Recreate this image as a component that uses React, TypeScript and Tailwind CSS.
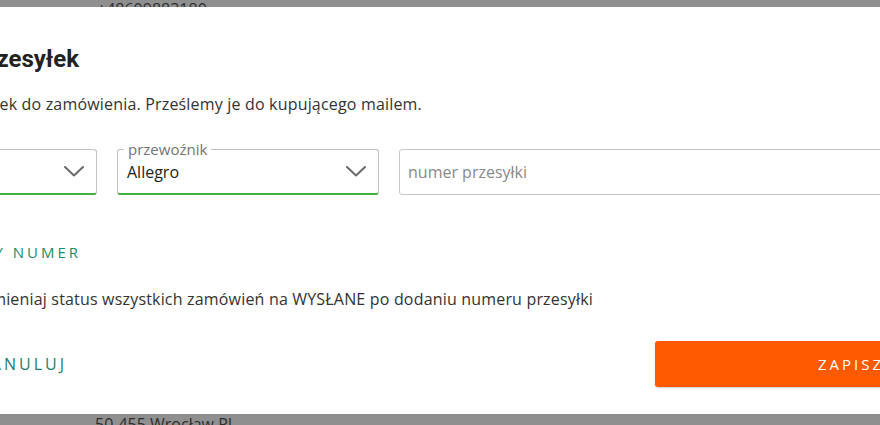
import React from "react"

const Chevron = () => (
  <svg width="20" height="11" viewBox="0 0 20 11" fill="none" className="shrink-0">
    <path d="M1 1 L10 9.5 L19 1" stroke="#6a6a6a" strokeWidth="2" strokeLinecap="round" strokeLinejoin="round" />
  </svg>
)

const App: React.FC = () => {
  return (
    <div className="w-[880px] h-[425px] overflow-hidden bg-[#8f8f8f] flex flex-col font-['Open_Sans','Liberation_Sans',sans-serif]">
      {/* page behind the overlay */}
      <div className="h-[7px] shrink-0 overflow-hidden pl-[97px]">
        <p className="text-[16px] leading-[20px] text-[#2e2e2e] -mt-[1px]">+48609883180</p>
      </div>

      {/* dialog */}
      <div className="h-[407px] shrink-0 bg-white pt-[37px] flex flex-col">
        <div className="w-[79px] flex justify-end whitespace-nowrap">
          <h2 className="text-[24px] leading-[30px] font-bold text-[#222] font-['Roboto','Liberation_Sans',sans-serif]">
            Numery przesyłek
          </h2>
        </div>

        <div className="w-[422px] mt-[19px] flex justify-end whitespace-nowrap">
          <p className="text-[16px] leading-[22px] tracking-[0.18px] text-[#333]">
            Dodaj numery przesyłek do zamówienia. Prześlemy je do kupującego mailem.
          </p>
        </div>

        <div className="mt-[34px] -ml-[83px] flex gap-5 shrink-0">
          <div className="w-[180px] h-[46px] shrink-0 flex items-center justify-end pr-[12px] border border-[#c2c2c2] border-b-2 border-b-[#45b03a] rounded-[3px]">
            <Chevron />
          </div>

          <div className="relative w-[262px] h-[46px] shrink-0 flex items-center justify-between pl-[9px] pr-[12px] border border-[#c2c2c2] border-b-2 border-b-[#45b03a] rounded-[3px]">
            <span className="absolute left-[6px] -top-[10px] bg-white px-[4px] text-[15px] leading-[18px] text-[#757575]">
              przewoźnik
            </span>
            <span className="text-[16px] leading-[22px] text-[#222]">Allegro</span>
            <Chevron />
          </div>

          <input
            readOnly
            placeholder="numer przesyłki"
            className="w-[520px] h-[46px] shrink-0 pl-[8px] border border-[#c8c8c8] rounded-[3px] text-[16px] text-[#222] placeholder:text-[#8a8a8a] outline-none bg-white"
          />
        </div>

        <div className="w-[81px] mt-[46px] flex justify-end whitespace-nowrap">
          <span className="text-[15px] leading-[22px] tracking-[3px] text-[#1c8c6c]">DODAJ KOLEJNY NUMER</span>
        </div>

        <div className="w-[593px] mt-[25px] flex justify-end whitespace-nowrap">
          <span className="text-[16px] leading-[22px] tracking-[0.18px] text-[#333]">
            Zmieniaj status wszystkich zamówień na WYSŁANE po dodaniu numeru przesyłki
          </span>
        </div>

        <div className="mt-[31px] flex items-center shrink-0">
          <div className="w-[67px] flex justify-end whitespace-nowrap shrink-0">
            <span className="text-[16px] leading-[22px] tracking-[3px] text-[#247e69]">ANULUJ</span>
          </div>
          <button className="ml-[588px] w-[392px] h-[46px] shrink-0 bg-[#ff5a00] rounded-[3px] shadow-[0_1px_2px_rgba(0,0,0,0.2)] text-white text-[15px] tracking-[3px]">
            ZAPISZ
          </button>
        </div>
      </div>

      <div className="h-[11px] shrink-0 overflow-hidden pl-[95px]">
        <p className="text-[16px] leading-[20px] text-[#2e2e2e]">50-455 Wrocław PL</p>
      </div>
    </div>
  )
}

export default App
